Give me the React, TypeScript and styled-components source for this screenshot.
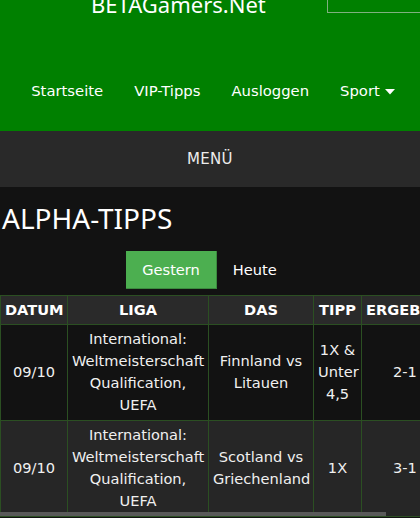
import styled, { createGlobalStyle } from "styled-components"

const GlobalStyle = createGlobalStyle`
    html, body {
        margin: 0;
        padding: 0;
        background: #121212;
        overflow: hidden;
    }
    * {
        box-sizing: border-box;
    }
`

const rows = [
    { date: "09/10", league: "International: Weltmeisterschaft Qualification, UEFA", match: ["Finnland vs", "Litauen"], tip: "1X & Unter 4,5", result: "2-1" },
    { date: "09/10", league: "International: Weltmeisterschaft Qualification, UEFA", match: ["Scotland vs", "Griechenland"], tip: "1X", result: "3-1" },
]

const App = () => {
    return (
        <Page>
            <GlobalStyle />
            <Header>
                <TopRow>
                    <Brand>BETAGamers.Net</Brand>
                    <SearchBox />
                </TopRow>
                <Nav>
                    <NavItem>Startseite</NavItem>
                    <NavItem>VIP-Tipps</NavItem>
                    <NavItem>Ausloggen</NavItem>
                    <NavItem>
                        Sport
                        <svg width="10" height="6" viewBox="0 0 10 6">
                            <path d="M0 0 H10 L5 5.5 Z" fill="#fff" />
                        </svg>
                    </NavItem>
                </Nav>
            </Header>
            <MenuBar>MENÜ</MenuBar>
            <Content>
                <Title>ALPHA-TIPPS</Title>
                <Tabs>
                    <Tab $active>Gestern</Tab>
                    <Tab>Heute</Tab>
                </Tabs>
                <TableScroll>
                    <Table>
                        <thead>
                            <tr>
                                <Th $w={67}>DATUM</Th>
                                <Th $w={141}>LIGA</Th>
                                <Th $w={105}>DAS</Th>
                                <Th $w={48}>TIPP</Th>
                                <Th $w={96}>ERGEBNIS</Th>
                            </tr>
                        </thead>
                        <tbody>
                            {rows.map((r, i) => (
                                <Row key={i} $odd={i % 2 === 1}>
                                    <Td>{r.date}</Td>
                                    <Td>{r.league}</Td>
                                    <Td>{r.match[0]}<br />{r.match[1]}</Td>
                                    <Td>{r.tip}</Td>
                                    <Td>{r.result}</Td>
                                </Row>
                            ))}
                        </tbody>
                    </Table>
                    <ScrollThumb />
                </TableScroll>
            </Content>
        </Page>
    )
}
export default App

const Page = styled.div`
    width: 420px;
    height: 518px;
    overflow: hidden;
    background: #121212;
    font-family: "DejaVu Sans", Verdana, sans-serif;
`
const Header = styled.div`
    height: 131px;
    background: #008000;
    display: flex;
    flex-direction: column;
`
const TopRow = styled.div`
    height: 13px;
    display: flex;
    align-items: flex-start;
`
const Brand = styled.h1`
    margin: -7px 0 0 91px;
    font-family: "Noto Sans", sans-serif;
    font-weight: 400;
    font-size: 22px;
    line-height: 22px;
    color: #fff;
    white-space: nowrap;
`
const SearchBox = styled.div`
    margin-left: auto;
    width: 93px;
    height: 13px;
    border-left: 1px solid #7fb07f;
    border-bottom: 1px solid #7fb07f;
`
const Nav = styled.div`
    margin-top: 68px;
    padding-left: 6px;
    display: flex;
    justify-content: center;
    gap: 31px;
`
const NavItem = styled.div`
    display: flex;
    align-items: center;
    gap: 5px;
    font-size: 14.8px;
    line-height: 20px;
    color: #fff;
    white-space: nowrap;
    svg {
        margin-top: 1px;
    }
`
const MenuBar = styled.div`
    height: 56px;
    background: #292929;
    display: flex;
    align-items: center;
    justify-content: center;
    font-size: 15px;
    color: #ededed;
    letter-spacing: 0.3px;
`
const Content = styled.div`
    padding-top: 14px;
`
const Title = styled.h2`
    margin: 0;
    padding-left: 2px;
    font-family: "Noto Sans", sans-serif;
    font-weight: 400;
    font-size: 28px;
    line-height: 34px;
    color: #fff;
`
const Tabs = styled.div`
    margin-top: 16px;
    display: flex;
    justify-content: center;
`
const Tab = styled.div<{ $active?: boolean }>`
    height: 38px;
    padding: 0 16px;
    display: flex;
    align-items: center;
    font-size: 14.6px;
    color: #fff;
    background: ${p => (p.$active ? "#4caf50" : "transparent")};
    border-right: 1px solid ${p => (p.$active ? "#3b8a3e" : "transparent")};
    border-bottom: 1px solid ${p => (p.$active ? "#3b8a3e" : "transparent")};
`
const TableScroll = styled.div`
    position: relative;
    margin-top: 6px;
    overflow: hidden;
`
const Table = styled.table`
    width: 457px;
    table-layout: fixed;
    border-collapse: collapse;
    font-size: 14.6px;
    line-height: 22px;
    color: #f0f0f0;
    text-align: center;
`
const Th = styled.th<{ $w: number }>`
    width: ${p => p.$w}px;
    padding: 3px 4px;
    background: #2a2a2a;
    color: #fff;
    font-weight: 700;
    border: 1px solid #2b4f22;
    white-space: nowrap;
    overflow: hidden;
    text-align: center;
    &:last-child {
        text-align: left;
    }
`
const Row = styled.tr<{ $odd: boolean }>`
    background: ${p => (p.$odd ? "#262626" : "#121212")};
`
const Td = styled.td`
    padding: 3px 4px 4px;
    border: 1px solid #2b4f22;
    vertical-align: middle;
    &:last-child {
        text-align: left;
        padding-left: 31px;
    }
`
const ScrollThumb = styled.div`
    position: absolute;
    left: 0;
    bottom: 1px;
    width: 386px;
    height: 4px;
    background: #595959;
`
